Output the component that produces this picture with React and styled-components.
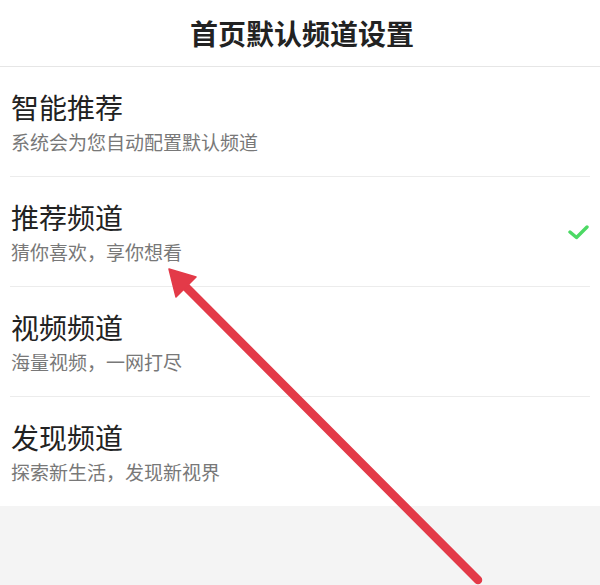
import React from "react";
import styled, { createGlobalStyle } from "styled-components";

const Global = createGlobalStyle`
  html, body { margin: 0; padding: 0; background: #f4f4f4; }
  body { font-family: "Noto Sans CJK SC", "Noto Sans", sans-serif; }
  * { box-sizing: border-box; }
`;

const Page = styled.div`
  position: relative;
  width: 600px;
  height: 585px;
  display: flex;
  flex-direction: column;
  overflow: hidden;
  background: #f4f4f4;
`;

const Header = styled.header`
  height: 67px;
  display: flex;
  align-items: center;
  justify-content: center;
  background: #fff;
  border-bottom: 1px solid #e6e6e6;
`;

const Title = styled.h1`
  margin: 0;
  font-size: 28px;
  line-height: 34px;
  font-weight: 700;
  color: #222;
  padding-left: 4px;
`;

const List = styled.ul`
  list-style: none;
  margin: 0;
  padding: 0 10px;
  background: #fff;
`;

const Row = styled.li`
  display: flex;
  align-items: center;
  justify-content: space-between;
  height: ${(p) => (p.$last ? "109px" : "110px")};
  padding: 0 1px;
  border-bottom: ${(p) => (p.$last ? "none" : "1px solid #ececec")};
`;

const Texts = styled.div`
  display: flex;
  flex-direction: column;
  gap: 6px;
  padding-top: 1px;
`;

const Name = styled.div`
  font-size: 28px;
  line-height: 34px;
  color: #222;
`;

const Desc = styled.div`
  font-size: 19px;
  line-height: 24px;
  color: #787878;
`;

const Filler = styled.div`
  flex: 1;
  background: #f4f4f4;
`;

const Overlay = styled.svg`
  position: absolute;
  left: 0;
  top: 0;
  pointer-events: none;
`;

const Check = () => (
  <svg width="22" height="16" viewBox="0 0 22 16">
    <path d="M3 8 L9.5 13.5 L20 3" fill="none" stroke="#4cd964" strokeWidth="3.4" strokeLinecap="round" strokeLinejoin="round" />
  </svg>
);

const items = [
  { name: "智能推荐", desc: "系统会为您自动配置默认频道" },
  { name: "推荐频道", desc: "猜你喜欢，享你想看", checked: true },
  { name: "视频频道", desc: "海量视频，一网打尽" },
  { name: "发现频道", desc: "探索新生活，发现新视界" },
];

export default function App() {
  return (
    <>
      <Global />
      <Page>
        <Header>
          <Title>首页默认频道设置</Title>
        </Header>
        <List>
          {items.map((it, i) => (
            <Row key={it.name} $last={i === items.length - 1}>
              <Texts>
                <Name>{it.name}</Name>
                <Desc>{it.desc}</Desc>
              </Texts>
              {it.checked && <Check />}
            </Row>
          ))}
        </List>
        <Filler />
        <Overlay width="600" height="585" viewBox="0 0 600 585">
          <line x1="182" y1="283" x2="478" y2="580" stroke="#e33a48" strokeWidth="8.5" strokeLinecap="round" />
          <polygon points="169,269 196,277 176,297" fill="#e33a48" stroke="#e33a48" strokeWidth="1.5" strokeLinejoin="round" />
        </Overlay>
      </Page>
    </>
  );
}
